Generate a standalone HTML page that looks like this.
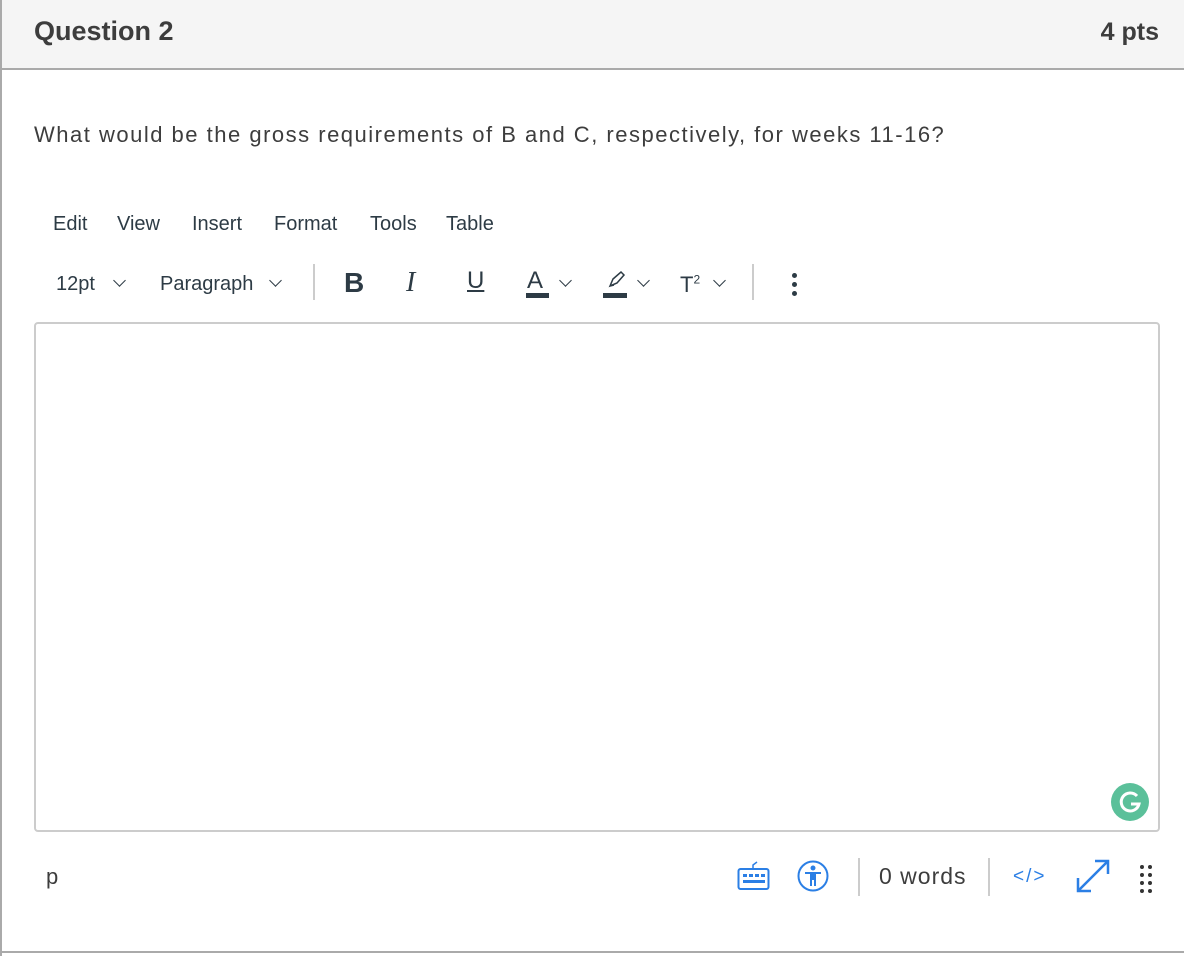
<!DOCTYPE html>
<html><head><meta charset="utf-8"><style>
*{margin:0;padding:0;box-sizing:border-box}
body{width:1184px;height:956px;background:#fff;font-family:"Liberation Sans",sans-serif;color:#3d3d3d;position:relative;overflow:hidden}
.a{position:absolute;white-space:nowrap}
.hdr{left:0;top:0;width:1184px;height:70px;background:#f5f5f5;border-bottom:2px solid #aaa}
.lb{left:0;top:0;width:2px;height:956px;background:#aaa}
.bb{left:0;top:951px;width:1184px;height:2px;background:#aaa}
.m{font-size:20px;top:213px;color:#2d3b45}
.t{font-size:20px;top:273px;color:#2d3b45}
.chev{width:9px;height:9px;border-right:1.5px solid #2d3b45;border-bottom:1.5px solid #2d3b45;transform:rotate(45deg)}
.sep{width:2px;background:#ccc}
</style></head><body>
<div class="a hdr"></div>
<div class="a lb"></div>
<div class="a bb"></div>
<div class="a" style="left:34px;top:16px;font-size:27px;font-weight:bold;color:#3d3d3d">Question 2</div>
<div class="a" style="right:25px;top:18px;font-size:25px;font-weight:bold;color:#3d3d3d">4 pts</div>
<div class="a" style="left:34px;top:122px;font-size:22px;letter-spacing:1.5px;color:#3d3d3d">What would be the gross requirements of B and C, respectively, for weeks 11-16?</div>
<div class="a m" style="left:53px">Edit</div>
<div class="a m" style="left:117px">View</div>
<div class="a m" style="left:192px">Insert</div>
<div class="a m" style="left:274px">Format</div>
<div class="a m" style="left:370px">Tools</div>
<div class="a m" style="left:446px">Table</div>
<div class="a t" style="left:56px">12pt</div>
<div class="a chev" style="left:115px;top:276px"></div>
<div class="a t" style="left:160px">Paragraph</div>
<div class="a chev" style="left:271px;top:276px"></div>
<div class="a sep" style="left:313px;top:264px;height:36px"></div>
<div class="a" style="left:344px;top:267px;font-size:28px;font-weight:bold;color:#2d3b45">B</div>
<div class="a" style="left:406px;top:267px;font-size:28px;font-style:italic;color:#2d3b45;font-family:'Liberation Serif',serif">I</div>
<div class="a" style="left:467px;top:267px;font-size:24px;color:#2d3b45;text-decoration:underline">U</div>
<div class="a" style="left:527px;top:267px;font-size:24px;color:#2d3b45">A</div>
<div class="a" style="left:526px;top:293px;width:23px;height:5px;background:#2d3b45"></div>
<div class="a chev" style="left:561px;top:276px"></div>
<svg class="a" style="left:604px;top:270px" width="24" height="22" viewBox="0 0 24 22"><path d="M6 16l3-7 8-7 3 3-7 8z M6 16l4-1" fill="none" stroke="#2d3b45" stroke-width="1.5"/></svg>
<div class="a" style="left:603px;top:293px;width:24px;height:5px;background:#2d3b45"></div>
<div class="a chev" style="left:639px;top:276px"></div>
<div class="a" style="left:680px;top:272px;font-size:22px;color:#2d3b45">T<sup style="font-size:12px">2</sup></div>
<div class="a chev" style="left:715px;top:276px"></div>
<div class="a sep" style="left:752px;top:264px;height:36px"></div>
<div class="a" style="left:792px;top:273px;width:5px;height:5px;border-radius:50%;background:#2d3b45"></div>
<div class="a" style="left:792px;top:282px;width:5px;height:5px;border-radius:50%;background:#2d3b45"></div>
<div class="a" style="left:792px;top:291px;width:5px;height:5px;border-radius:50%;background:#2d3b45"></div>
<div class="a" style="left:34px;top:322px;width:1126px;height:510px;border:2px solid #ccc;border-radius:4px"></div>
<div class="a" style="left:1111px;top:783px;width:38px;height:38px;border-radius:50%;background:#5bc09a"></div>
<svg class="a" style="left:1111px;top:783px" width="38" height="38" viewBox="0 0 38 38"><path d="M26 13a9 9 0 1 0 2 8h-8" fill="none" stroke="#fff" stroke-width="3"/></svg>
<div class="a" style="left:46px;top:864px;font-size:22px;color:#3d3d3d">p</div>
<svg class="a" style="left:737px;top:860px" width="34" height="32" viewBox="0 0 34 32"><rect x="1.5" y="9" width="30" height="20" rx="2" fill="none" stroke="#2b7fe5" stroke-width="2"/><path d="M16 9V5l4-3" fill="none" stroke="#2b7fe5" stroke-width="1.5"/><g fill="#2b7fe5"><rect x="6" y="14" width="4" height="3"/><rect x="12" y="14" width="4" height="3"/><rect x="18" y="14" width="4" height="3"/><rect x="24" y="14" width="4" height="3"/><rect x="6" y="20" width="22" height="3"/></g></svg>
<svg class="a" style="left:797px;top:859px" width="34" height="34" viewBox="0 0 34 34"><circle cx="16" cy="17" r="14.5" fill="none" stroke="#2b7fe5" stroke-width="2"/><circle cx="16" cy="9" r="2.5" fill="#2b7fe5"/><path d="M8 13h16v2h-5v12h-2v-6h-2v6h-2V15H8z" fill="#2b7fe5"/></svg>
<div class="a sep" style="left:858px;top:858px;height:38px"></div>
<div class="a" style="left:879px;top:863px;font-size:23px;letter-spacing:1px;color:#3d3d3d">0 words</div>
<div class="a sep" style="left:988px;top:858px;height:38px"></div>
<div class="a" style="left:1013px;top:866px;font-size:19px;color:#2b7fe5;letter-spacing:2px">&lt;/&gt;</div>
<svg class="a" style="left:1075px;top:858px" width="36" height="36" viewBox="0 0 36 36"><path d="M3 33L33 3M20 3h13v13M3 20v13h13" fill="none" stroke="#2b7fe5" stroke-width="2.5"/></svg>
<svg class="a" style="left:1138px;top:864px" width="18" height="30" viewBox="0 0 18 30"><g fill="#333"><circle cx="4" cy="3" r="2"/><circle cx="12" cy="3" r="2"/><circle cx="4" cy="11" r="2"/><circle cx="12" cy="11" r="2"/><circle cx="4" cy="19" r="2"/><circle cx="12" cy="19" r="2"/><circle cx="4" cy="27" r="2"/><circle cx="12" cy="27" r="2"/></g></svg>
</body></html>
